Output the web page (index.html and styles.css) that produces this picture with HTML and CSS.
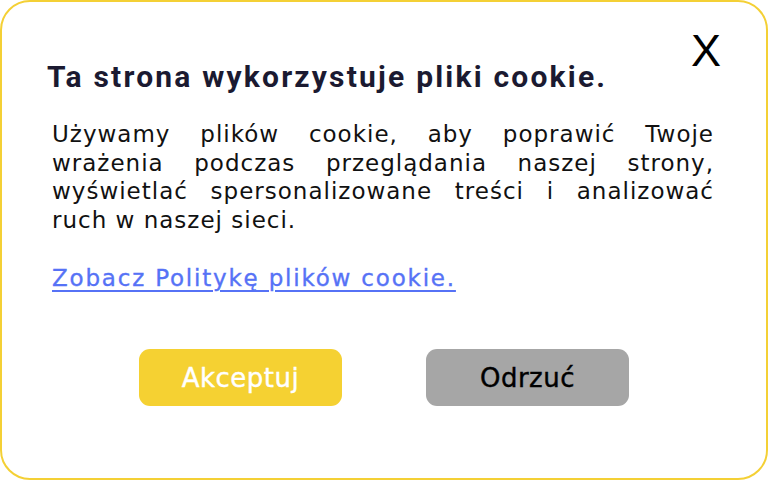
FILE: index.html
```html
<!DOCTYPE html>
<html lang="pl">
<head>
<meta charset="utf-8">
<link rel="stylesheet" href="styles.css">
</head>
<body>
<div class="dialog">
  <button class="close" aria-label="Zamknij">X</button>
  <h1 class="title">Ta strona wykorzystuje pliki cookie.</h1>
  <p class="text">Używamy plików cookie, aby poprawić Twoje wrażenia podczas przeglądania naszej strony, wyświetlać spersonalizowane treści i analizować ruch w naszej sieci.</p>
  <a class="link" href="#">Zobacz Politykę plików cookie.</a>
  <div class="actions">
    <button class="btn accept">Akceptuj</button>
    <button class="btn reject">Odrzuć</button>
  </div>
</div>
</body>
</html>
```
FILE: styles.css
```css
html, body {
  margin: 0;
  padding: 0;
  background: #ffffff;
}
.dialog {
  position: relative;
  box-sizing: border-box;
  width: 768px;
  height: 480px;
  border: 2px solid #f4d035;
  border-radius: 30px;
  padding: 57px 52px 0 50px;
  font-family: "DejaVu Sans", sans-serif;
}
.close {
  position: absolute;
  top: 26px;
  right: 45px;
  border: 0;
  background: none;
  padding: 0;
  font-family: "Liberation Sans", Arial, sans-serif;
  font-size: 45px;
  font-weight: 400;
  line-height: 45px;
  color: #000;
  cursor: pointer;
}
.title {
  margin: 0 0 0 -5px;
  font-family: Roboto, sans-serif;
  font-weight: 700;
  font-size: 30px;
  line-height: 36px;
  letter-spacing: 2.2px;
  color: #1b1a31;
}
.text {
  margin: 25px 0 0 0;
  font-size: 23px;
  line-height: 28.5px;
  letter-spacing: 1px;
  text-align: justify;
  color: #111111;
}
.link {
  display: inline-block;
  margin-top: 29px;
  font-size: 23px;
  line-height: 30px;
  letter-spacing: 1.8px;
  -webkit-text-stroke: 0.35px #5672f6;
  color: #5672f6;
  text-decoration: underline;
  text-decoration-thickness: 2px;
  text-underline-offset: 4px;
}
.actions {
  display: flex;
  gap: 84px;
  margin-top: 56px;
  padding-left: 87px;
}
.btn {
  width: 203px;
  height: 57px;
  border: 0;
  border-radius: 11px;
  padding: 0;
  font-family: "DejaVu Sans", sans-serif;
  font-size: 26px;
  letter-spacing: 0.5px;
  cursor: pointer;
}
.accept {
  background: #f5d132;
  color: #ffffff;
  -webkit-text-stroke: 0.4px #ffffff;
}
.reject {
  background: #a6a6a6;
  color: #000000;
  -webkit-text-stroke: 0.4px #000000;
}
```
